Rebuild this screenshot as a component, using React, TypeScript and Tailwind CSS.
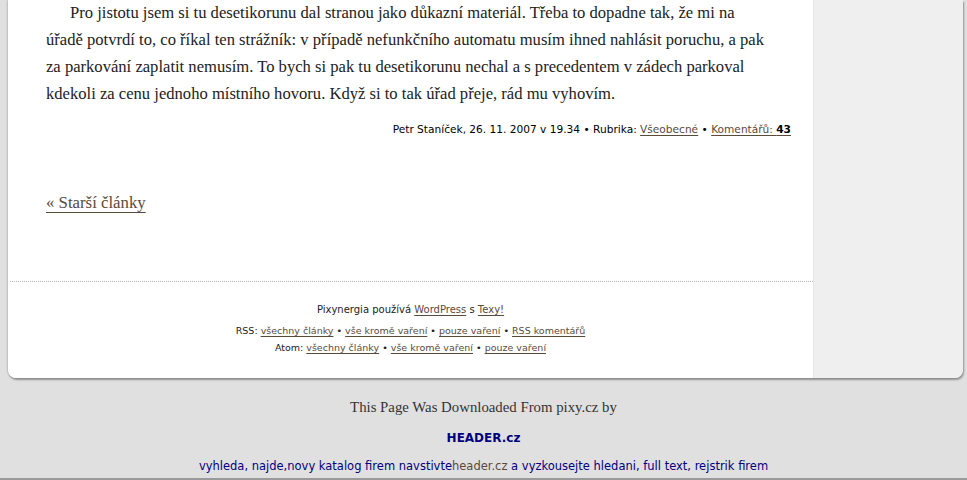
import React from "react";

const serif = { fontFamily: '"Liberation Serif", "DejaVu Serif", serif' };
const sans = { fontFamily: '"DejaVu Sans", Verdana, sans-serif' };

function L({ children }: { children: React.ReactNode }) {
  return <a className="text-[#5a4a3a] underline underline-offset-2 decoration-[#5a4a3a]">{children}</a>;
}

export default function App() {
  return (
    <div className="h-[480px] w-[967px] bg-[#e0e0e0] overflow-hidden">
      <div className="ml-[8px] w-[955px] flex rounded-b-[8px] overflow-hidden shadow-[1px_2px_2px_rgba(0,0,0,0.35),-1px_0_2px_rgba(0,0,0,0.15)]">
        <main className="w-[805px] bg-white">
          <div className="pl-[38px] text-[16.6px] leading-[27px] text-[#222] whitespace-nowrap" style={serif}>
            <p className="-mt-[1px]">
              <span className="pl-[24px]">Pro jistotu jsem si tu desetikorunu dal stranou jako důkazní materiál. Třeba to dopadne tak, že mi na</span>
              <br />
              úřadě potvrdí to, co říkal ten strážník: v případě nefunkčního automatu musím ihned nahlásit poruchu, a pak
              <br />
              za parkování zaplatit nemusím. To bych si pak tu desetikorunu nechal a s precedentem v zádech parkoval
              <br />
              kdekoli za cenu jednoho místního hovoru. Když si to tak úřad přeje, rád mu vyhovím.
            </p>
          </div>
          <div className="mt-[15px] pr-[22px] text-right text-[10.6px] leading-[14px] text-black" style={sans}>
            Petr Staníček, 26. 11. 2007 v 19.34 • Rubrika: <L>Všeobecné</L> • <L>Komentářů: <b className="text-black">43</b></L>
          </div>
          <div className="mt-[57px] pl-[38px] text-[16.8px] leading-[20px]" style={serif}>
            <a className="text-[#5a4a3a] underline underline-offset-[4px] decoration-[#5a4a3a]">« Starší články</a>
          </div>
          <div className="mt-[68px] ml-[2px] border-t border-dotted border-[#b8b8b8]" />
          <div className="pt-[21px] pb-[22px] text-center text-[9.5px] text-[#222]" style={sans}>
            <div className="leading-[14px] text-[10px]">Pixynergia používá <L>WordPress</L> s <L>Texy!</L></div>
            <div className="mt-[5px] leading-[17px]">RSS: <L>všechny články</L> • <L>vše kromě vaření</L> • <L>pouze vaření</L> • <L>RSS komentářů</L></div>
            <div className="leading-[17px]">Atom: <L>všechny články</L> • <L>vše kromě vaření</L> • <L>pouze vaření</L></div>
          </div>
        </main>
        <aside className="flex-1 bg-[#efefef] border-l border-[#e8e8e8]" />
      </div>
      <div className="pt-[20px] text-center">
        <div className="text-[14.8px] leading-[18px] text-[#333]" style={serif}>This Page Was Downloaded From pixy.cz by</div>
        <div className="mt-[14px] text-[12px] leading-[16px] font-bold text-[#000080]" style={sans}>HEADER.cz</div>
        <div className="mt-[12px] text-[11.5px] leading-[16px] text-[#000080]" style={sans}>
          vyhleda, najde,novy katalog firem navstivte<span className="text-[#5a4a3a]">header.cz</span> a vyzkousejte hledani, full text, rejstrik firem
        </div>
        <div className="mt-[4px] border-t-2 border-[#9a9a9a]" />
      </div>
    </div>
  );
}
